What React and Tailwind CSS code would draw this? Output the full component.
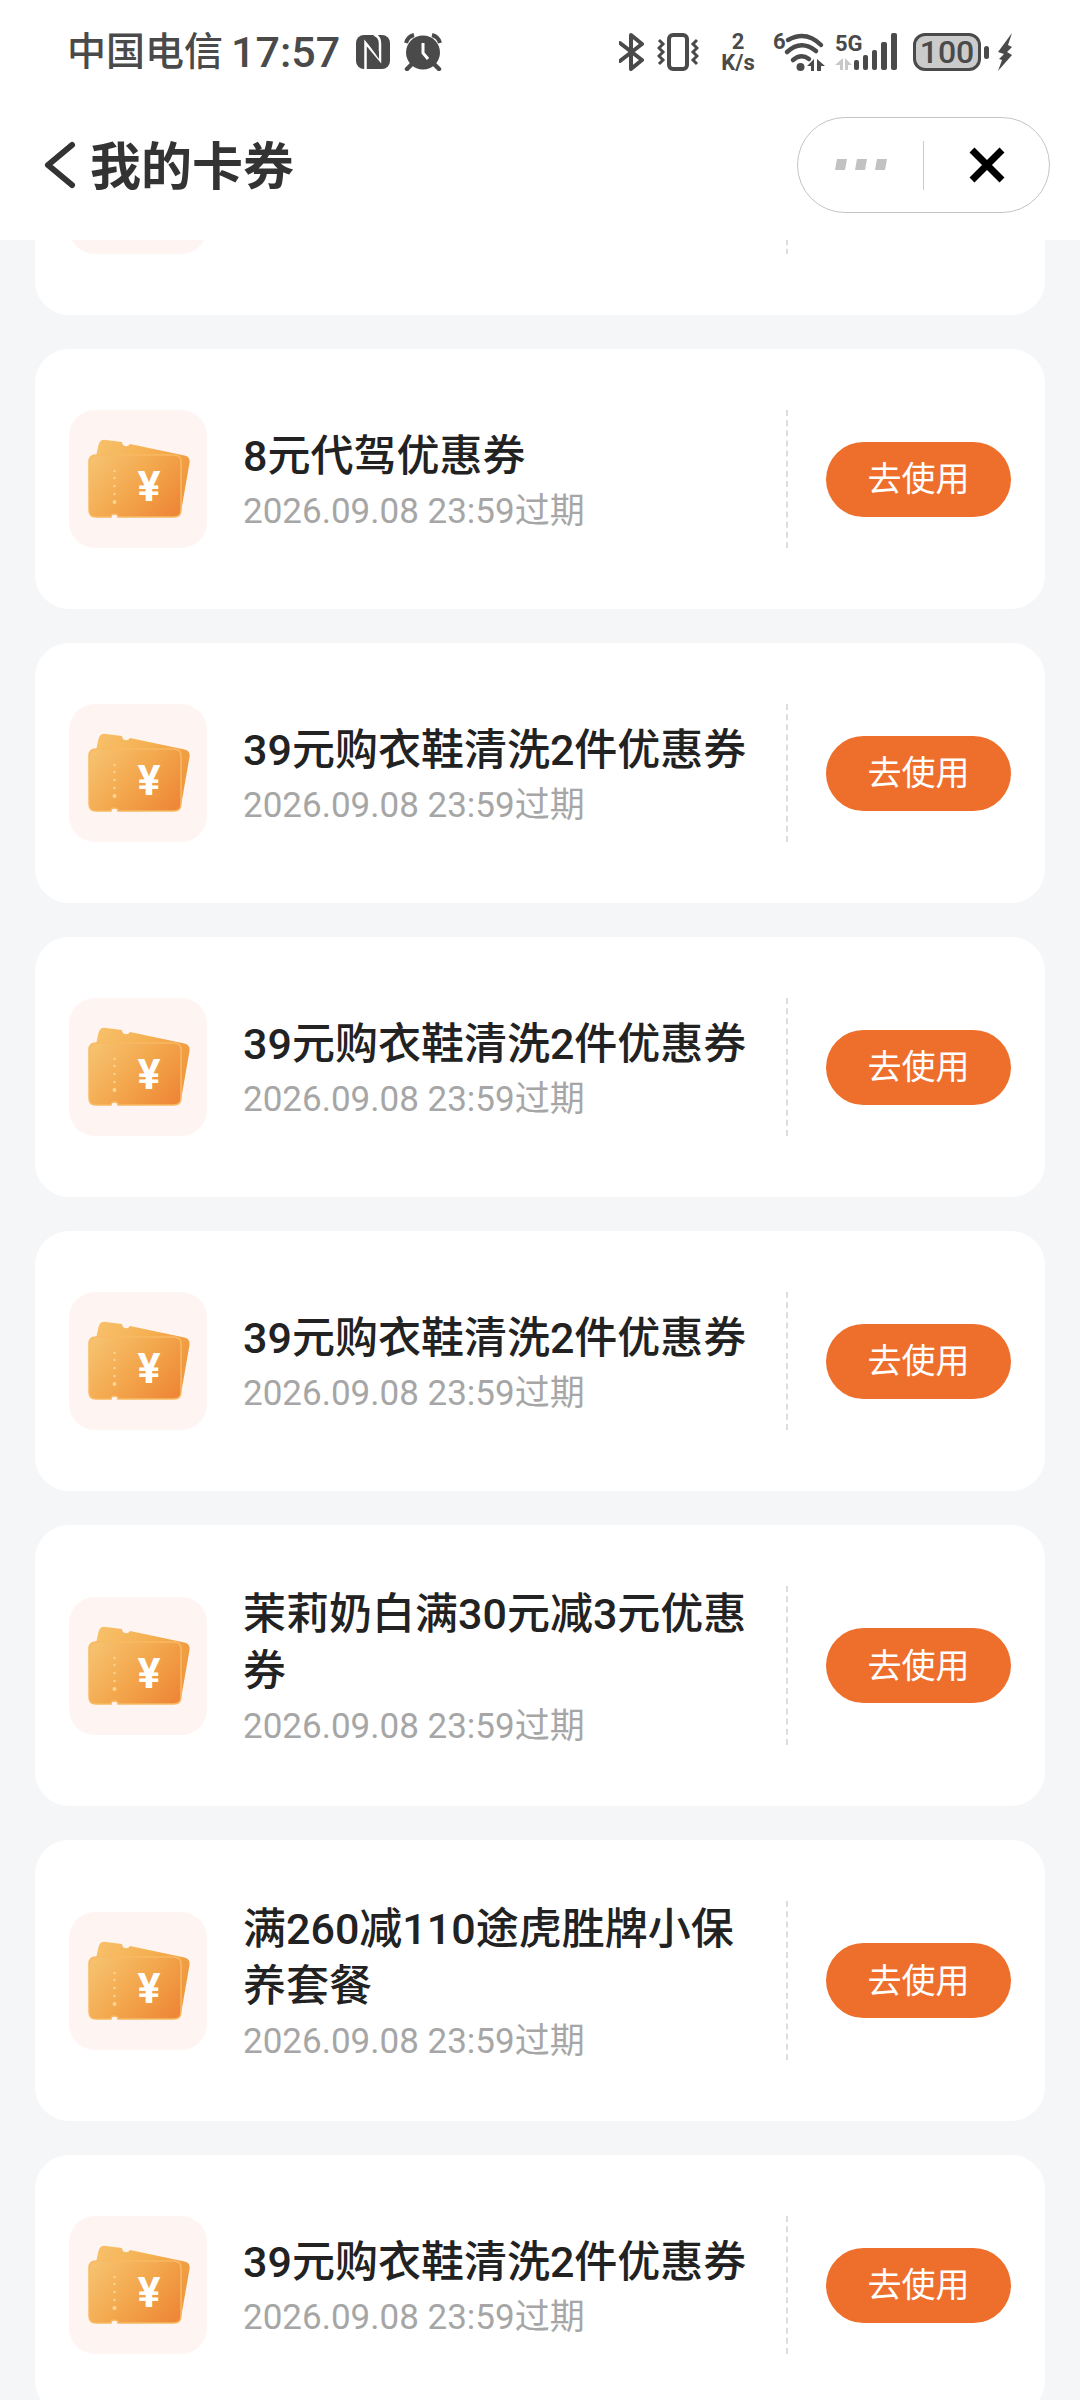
import { useId } from 'react';

const COUPONS = [
  { id: 1, title: '8元代驾优惠券', expires: '2026.09.08 23:59过期' },
  { id: 2, title: '39元购衣鞋清洗2件优惠券', expires: '2026.09.08 23:59过期' },
  { id: 3, title: '39元购衣鞋清洗2件优惠券', expires: '2026.09.08 23:59过期' },
  { id: 4, title: '39元购衣鞋清洗2件优惠券', expires: '2026.09.08 23:59过期' },
  { id: 5, title: '茉莉奶白满30元减3元优惠券', expires: '2026.09.08 23:59过期' },
  { id: 6, title: '满260减110途虎胜牌小保养套餐', expires: '2026.09.08 23:59过期' },
  { id: 7, title: '39元购衣鞋清洗2件优惠券', expires: '2026.09.08 23:59过期' },
];

function NfcIcon() {
  return (
    <svg width="34" height="36" viewBox="0 0 34 36" fill="none" aria-hidden="true">
      <rect x="0" y="1" width="34" height="34" rx="8" fill="currentColor" />
      <path d="M9.500 36V9L24 26V9.500q0-7-6-9" stroke="#fff" strokeWidth="2.500" />
      <path d="M11 8l5 1 7 9v7z" fill="currentColor" />
    </svg>
  );
}

function AlarmIcon() {
  return (
    <svg width="38" height="38" viewBox="0 0 38 38" fill="none" aria-hidden="true">
      <path d="M2 10a11 11 0 0 1 8-8M28 2a11 11 0 0 1 8 8" stroke="currentColor" strokeWidth="4" />
      <path d="M7 32l-4 4M31 32l4 4" stroke="currentColor" strokeWidth="4.500" strokeLinecap="round" />
      <circle cx="19" cy="19.500" r="17" fill="currentColor" />
      <path d="M19 10v10l5 6" stroke="#fff" strokeWidth="3" />
    </svg>
  );
}

function BluetoothIcon() {
  return (
    <svg width="26" height="38" viewBox="0 0 26 38" fill="none" aria-hidden="true">
      <path
        d="M1 10l22 17-11 9V2l11 9L1 28"
        stroke="currentColor"
        strokeWidth="4"
        strokeLinejoin="round"
        strokeLinecap="round"
      />
    </svg>
  );
}

function VibrateIcon() {
  return (
    <svg width="42" height="38" viewBox="0 0 42 38" fill="none" stroke="currentColor" aria-hidden="true">
      <rect x="12" y="2" width="18" height="34" rx="4" strokeWidth="4" />
      <path d="M2 7l4 4-4 4 4 4-4 4 4 4-4 4M40 7l-4 4 4 4-4 4 4 4-4 4 4 4" strokeWidth="3" />
    </svg>
  );
}

function WifiIcon() {
  return (
    <svg width="52" height="42" viewBox="0 0 52 42" fill="none" className="overflow-visible" aria-hidden="true">
      <text x="0" y="18" fontSize="22" fontWeight="700" fill="currentColor">6</text>
      <g stroke="currentColor" strokeWidth="4.500" strokeLinecap="round">
        <path d="M15 9q18-10 33 5" />
        <path d="M14 21q14-13 29-1" />
        <path d="M20 29q8-7 16-1" />
      </g>
      <circle cx="27.500" cy="36" r="4" fill="currentColor" />
      <path d="M41 28v12h-3v-5h-4zM44 40V28l8 7h-4v5z" fill="currentColor" />
    </svg>
  );
}

function SignalIcon() {
  return (
    <svg width="62" height="40" viewBox="0 0 62 40" fill="currentColor" className="overflow-visible" aria-hidden="true">
      <text x="0" y="19" fontSize="22" fontWeight="700">5G</text>
      <path d="M8 26v12H5v-5H0zM10 38V26l7 7h-4v5z" fill="#c8c8c8" />
      <rect x="19" y="28" width="5" height="10" rx="2" />
      <rect x="28" y="23" width="5" height="15" rx="2" />
      <rect x="37" y="18" width="5" height="20" rx="2" />
      <rect x="46" y="10" width="6" height="28" rx="2" />
      <rect x="56" y="1" width="6" height="37" rx="2" />
    </svg>
  );
}

function Battery() {
  return (
    <div className="flex items-center">
      <span className="flex h-[38px] w-[68px] items-center justify-center rounded-[12px] border-[3px] border-[#4a4a4a] bg-[#cbcbcb] text-[32px] leading-none font-medium">
        100
      </span>
      <span className="ml-[3px] h-[13px] w-[5px] rounded-full bg-[#4a4a4a]" />
      <svg width="16" height="38" viewBox="0 0 16 38" fill="currentColor" className="ml-2" aria-hidden="true">
        <path d="M15 0L1 19l6 2-5 5 3 1L1 38 15 22l-5-3 5-5-4-2z" />
      </svg>
    </div>
  );
}

function StatusBar() {
  return (
    <div className="flex h-[104px] items-center justify-between px-[67px] text-[#4a4a4a]">
      <div className="flex items-center">
        <span className="text-[39px] leading-none font-medium">中国电信</span>
        <span className="ml-2 text-[43px] leading-none font-medium">17:57</span>
        <span className="ml-4 flex items-center gap-[14px]">
          <NfcIcon />
          <AlarmIcon />
        </span>
      </div>
      <div className="flex items-center">
        <BluetoothIcon />
        <span className="ml-3">
          <VibrateIcon />
        </span>
        <span className="ml-5 flex w-[38px] flex-col items-center text-[22px] leading-[21px] font-bold">
          <span>2</span>
          <span>K/s</span>
        </span>
        <span className="mr-[10px] ml-4">
          <WifiIcon />
        </span>
        <SignalIcon />
        <span className="ml-4">
          <Battery />
        </span>
      </div>
    </div>
  );
}

function NavBar() {
  return (
    <div className="flex h-[122px] items-center justify-between pr-[30px] pl-11">
      <div className="flex items-center gap-[14px] text-[#333333]">
        <button type="button" aria-label="返回">
          <svg width="32" height="48" viewBox="0 0 32 48" fill="none" className="block">
            <path
              d="M28 4L4 24l24 20"
              stroke="currentColor"
              strokeWidth="6"
              strokeLinecap="round"
              strokeLinejoin="round"
            />
          </svg>
        </button>
        <h1 className="pt-1 text-[51px] leading-none font-bold">我的卡券</h1>
      </div>
      <div className="flex h-24 w-[253px] items-center rounded-full border border-[#c4c4c4]">
        <button type="button" aria-label="更多" className="flex flex-1 justify-center">
          <svg width="56" height="14" viewBox="0 0 56 14" fill="#c2c2c2">
            <path d="M4 1h10l-2 11H2zM24 1h10l-2 11H22zM44 1h10l-2 11H42z" />
          </svg>
        </button>
        <span className="h-[49px] w-px bg-[#cccccc]" />
        <button type="button" aria-label="关闭" className="flex flex-1 justify-center">
          <svg width="36" height="36" viewBox="0 0 36 36" fill="none">
            <path d="M3 3l30 30M33 3L3 33" stroke="#000" strokeWidth="7" />
          </svg>
        </button>
      </div>
    </div>
  );
}

function TicketIcon() {
  const id = useId();
  const front = `${id}-front`;
  const back = `${id}-back`;

  return (
    <svg viewBox="0 0 138 138" className="size-[138px] shrink-0 rounded-[26px] bg-[#fef5f2]" aria-hidden="true">
      <defs>
        <linearGradient id={front} x1="0" y1="0.200" x2="1" y2="0.800">
          <stop offset="0" stopColor="#f6c06c" />
          <stop offset="0.500" stopColor="#f3a74d" />
          <stop offset="1" stopColor="#ee8838" />
        </linearGradient>
        <linearGradient id={back} x1="0" y1="0" x2="1" y2="0.400">
          <stop offset="0" stopColor="#f7c26c" />
          <stop offset="0.550" stopColor="#f5b052" />
          <stop offset="1" stopColor="#f09a40" />
        </linearGradient>
      </defs>
      <path
        d="M37 30q-6-1-7.500 5L24 60l80 44q8 0 9-8l7.500-43q1-6-5-7.500L61 34q-2 3-5 2t-3-4z"
        fill={`url(#${back})`}
      />
      <path
        d="M27 45h15q0 3 3.500 3t3.500-3h56q7 0 7 7v48q0 7-7 7H49q0-3-3.500-3t-3.500 3H27q-7 0-7-7V52q0-7 7-7z"
        fill={`url(#${front})`}
        stroke="#f8b963"
        strokeWidth="1.500"
      />
      <g fill="#fbd490">
        <circle cx="45.500" cy="61" r="1.200" />
        <circle cx="45.500" cy="68" r="1.200" />
        <circle cx="45.500" cy="76" r="1.200" />
        <circle cx="45.500" cy="84" r="1.200" />
        <circle cx="45.500" cy="92" r="2" />
      </g>
      <text x="80" y="91" textAnchor="middle" fontSize="43" fontWeight="700" fill="#fff">¥</text>
    </svg>
  );
}

function Divider() {
  return <div className="mr-[38px] ml-8 self-stretch border-l-2 border-dashed border-[#dddddd]" />;
}

// Lower edge of the card that has been scrolled up under the header
function ScrolledCard() {
  return (
    <li className="flex rounded-b-[34px] bg-white px-[34px] pb-[61px]">
      <div className="h-[14px] w-[138px] overflow-hidden">
        <div className="-mt-[124px] h-[138px] rounded-[26px] bg-[#fef5f2]" />
      </div>
      <div className="flex-1" />
      <Divider />
      <div className="w-[185px]" />
    </li>
  );
}

function CouponCard({ coupon }) {
  return (
    <li className="flex items-center rounded-[34px] bg-white px-[34px] py-[61px]">
      <TicketIcon />
      <div className="ml-9 min-w-0 flex-1">
        <h2 className="text-[43px] leading-[57px] font-medium text-[#222222]">{coupon.title}</h2>
        <p className="mt-[9px] text-[35px] leading-[36px] text-[#a6a6a6]">{coupon.expires}</p>
      </div>
      <Divider />
      <button
        type="button"
        className="h-[75px] w-[185px] shrink-0 rounded-full bg-[#ee6e2c] text-[34px] leading-none text-white"
      >
        去使用
      </button>
    </li>
  );
}

export default function App() {
  return (
    <div className="flex h-screen flex-col overflow-hidden bg-[#f5f6f8] font-[Roboto,'Noto_Sans_CJK_SC',sans-serif]">
      <header className="shrink-0 bg-white pb-[14px]">
        <StatusBar />
        <NavBar />
      </header>
      <main className="min-h-0 flex-1 overflow-hidden px-[35px]">
        <ul className="flex flex-col gap-[34px]">
          <ScrolledCard />
          {COUPONS.map((coupon) => (
            <CouponCard key={coupon.id} coupon={coupon} />
          ))}
        </ul>
      </main>
    </div>
  );
}
